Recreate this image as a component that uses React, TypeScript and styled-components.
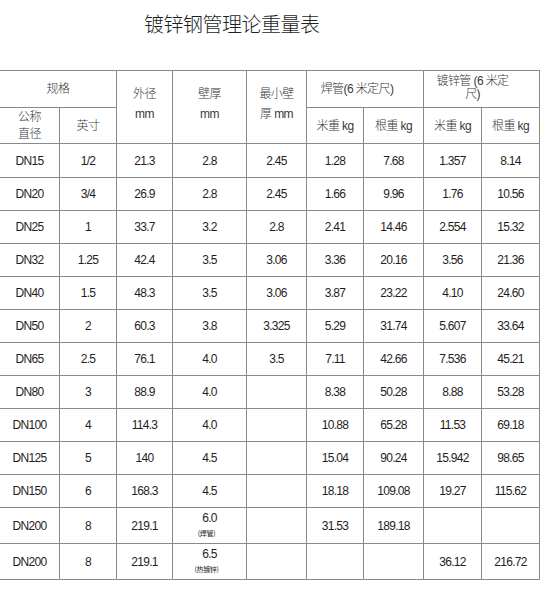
import React, {FC} from 'react';
import styled, {createGlobalStyle} from 'styled-components';

const GlobalStyle = createGlobalStyle`
    html, body {
        margin: 0;
        padding: 0;
        background: #ffffff;
    }
    body {
        font-family: "Liberation Sans", Arial, "Noto Sans CJK SC", sans-serif;
        color: #222;
    }
`;

type Row = string[];

// 公称直径, 英寸, 外径, 壁厚, 最小壁厚, 焊管米重, 焊管根重, 镀锌米重, 镀锌根重
const rows: Row[] = [
    ['DN15', '1/2', '21.3', '2.8', '2.45', '1.28', '7.68', '1.357', '8.14'],
    ['DN20', '3/4', '26.9', '2.8', '2.45', '1.66', '9.96', '1.76', '10.56'],
    ['DN25', '1', '33.7', '3.2', '2.8', '2.41', '14.46', '2.554', '15.32'],
    ['DN32', '1.25', '42.4', '3.5', '3.06', '3.36', '20.16', '3.56', '21.36'],
    ['DN40', '1.5', '48.3', '3.5', '3.06', '3.87', '23.22', '4.10', '24.60'],
    ['DN50', '2', '60.3', '3.8', '3.325', '5.29', '31.74', '5.607', '33.64'],
    ['DN65', '2.5', '76.1', '4.0', '3.5', '7.11', '42.66', '7.536', '45.21'],
    ['DN80', '3', '88.9', '4.0', '', '8.38', '50.28', '8.88', '53.28'],
    ['DN100', '4', '114.3', '4.0', '', '10.88', '65.28', '11.53', '69.18'],
    ['DN125', '5', '140', '4.5', '', '15.04', '90.24', '15.942', '98.65'],
    ['DN150', '6', '168.3', '4.5', '', '18.18', '109.08', '19.27', '115.62'],
];

const tallRows: {cells: Row; wall: string; note: string}[] = [
    {cells: ['DN200', '8', '219.1', '', '', '31.53', '189.18', '', ''], wall: '6.0', note: '(焊管)'},
    {cells: ['DN200', '8', '219.1', '', '', '', '', '36.12', '216.72'], wall: '6.5', note: '(热镀锌)'},
];

const colWidths = [60, 57, 56, 74, 60, 57, 60, 58, 58];

const App: FC = () => {
    return (
        <Page>
            <GlobalStyle/>
            <Title>镀锌钢管理论重量表</Title>
            <Table>
                <colgroup>
                    {colWidths.map((w, i) => <col key={i} style={{width: w}}/>)}
                </colgroup>
                <thead>
                    <HeadRow height={37}>
                        <Head colSpan={2}>规格</Head>
                        <Head rowSpan={2} $pad={6}>外径<br/>mm</Head>
                        <Head rowSpan={2} $pad={6}>壁厚<br/>mm</Head>
                        <Head rowSpan={2} $pad={6}>最小壁<br/>厚 mm</Head>
                        <Head colSpan={2} $shift={16}>焊管(6 米定尺)</Head>
                        <Head colSpan={2} $shift={18} $lh={13} $pad={2}>镀锌管 (6 米定<br/>尺)</Head>
                    </HeadRow>
                    <HeadRow height={36}>
                        <Head $lh={17}>公称<br/>直径</Head>
                        <Head>英寸</Head>
                        <Head>米重 kg</Head>
                        <Head>根重 kg</Head>
                        <Head>米重 kg</Head>
                        <Head>根重 kg</Head>
                    </HeadRow>
                </thead>
                <tbody>
                    {rows.map((r, i) => (
                        <DataRow key={i} height={i === 0 ? 34 : 33}>
                            {r.map((c, j) => <Cell key={j}>{c}</Cell>)}
                        </DataRow>
                    ))}
                    {tallRows.map((t, i) => (
                        <DataRow key={'t' + i} height={36}>
                            {t.cells.map((c, j) => j === 3
                                ? <Cell key={j}><Wall>{t.wall}</Wall><Note>{t.note}</Note></Cell>
                                : <Cell key={j}>{c}</Cell>)}
                        </DataRow>
                    ))}
                </tbody>
            </Table>
        </Page>
    );
};

export default App;

const Page = styled.div({
    width: 555,
    height: 590,
    overflow: 'hidden',
});

const Title = styled.h1({
    margin: 0,
    height: 70,
    paddingLeft: 144,
    paddingTop: 10,
    boxSizing: 'border-box',
    fontFamily: '"Noto Sans CJK SC", sans-serif',
    fontWeight: 300,
    fontSize: 20,
    lineHeight: '28px',
    color: '#1c1f24',
    letterSpacing: -0.5,
});

const Table = styled.table({
    borderCollapse: 'collapse',
    tableLayout: 'fixed',
    width: 541,
    marginLeft: -1,
    fontSize: 12,
    color: '#222',
});

const HeadRow = styled.tr<{height: number}>`
    height: ${p => p.height}px;
`;

const DataRow = styled.tr<{height: number}>`
    height: ${p => p.height}px;
`;

const Head = styled.th<{$shift?: number; $lh?: number; $pad?: number}>`
    border: 1px solid #8a8a8a;
    padding: 0 ${p => p.$shift ?? 0}px ${p => p.$pad ?? 0}px 0;
    font-weight: 300;
    font-family: "Liberation Sans", "Noto Sans CJK SC", sans-serif;
    font-size: 12px;
    line-height: ${p => p.$lh ?? 20}px;
    letter-spacing: -0.6px;
    text-align: center;
    vertical-align: middle;
    color: #383838;
    overflow: hidden;
`;

const Cell = styled.td`
    border: 1px solid #8a8a8a;
    padding: 0;
    text-align: center;
    vertical-align: middle;
    font-family: "Liberation Sans", Arial, sans-serif;
    font-size: 12px;
    letter-spacing: -0.7px;
    color: #1e1e1e;
`;

const Wall = styled.div({
    lineHeight: '16px',
    marginTop: -4,
});

const Note = styled.div({
    fontFamily: '"Noto Sans CJK SC", sans-serif',
    fontSize: 7,
    lineHeight: '10px',
    marginTop: 2,
    letterSpacing: -0.3,
    paddingRight: 6,
});
